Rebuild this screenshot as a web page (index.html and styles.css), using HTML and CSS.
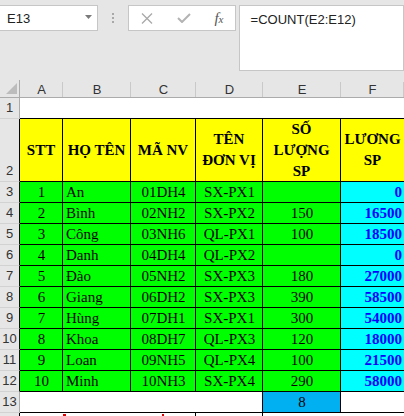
FILE: index.html
```html
<!DOCTYPE html>
<html>
<head>
<meta charset="utf-8">
<link rel="stylesheet" href="styles.css">
</head>
<body>
<div class="toolbar">
  <div class="namebox">
    <span class="ref">E13</span>
    <svg class="dd" viewBox="0 0 7 4"><path d="M0 0h7L3.5 4z"/></svg>
  </div>
  <div class="grip"><i></i><i></i><i></i></div>
  <div class="fxbox">
    <svg class="cancel" viewBox="0 0 12 11"><path d="M1 0.5L11 10.5M11 0.5L1 10.5"/></svg>
    <svg class="check" viewBox="0 0 14 10"><path d="M1 5l4 4L13 1"/></svg>
    <span class="fx">f<span class="fxx">x</span></span>
  </div>
  <div class="formula">=COUNT(E2:E12)</div>
</div>

<div class="sheet">
  <div class="corner"><svg viewBox="0 0 10 10"><path d="M10 0V10H0z"/></svg></div>
  <div class="ch">A</div><div class="ch">B</div><div class="ch">C</div><div class="ch">D</div><div class="ch">E</div><div class="ch">F</div>

  <div class="rh">1</div>
  <div class="c blank span6"></div>

  <div class="rh dk tall">2</div>
  <div class="c y h">STT</div>
  <div class="c y h">HỌ TÊN</div>
  <div class="c y h">MÃ NV</div>
  <div class="c y h">TÊN ĐƠN VỊ</div>
  <div class="c y h">SỐ LƯỢNG SP</div>
  <div class="c y h last">LƯƠNG SP</div>

  <div class="rh dk">3</div>
  <div class="c g ctr">1</div><div class="c g">An</div><div class="c g ctr">01DH4</div><div class="c g ctr">SX-PX1</div><div class="c g ctr"></div><div class="c cy rt num last">0</div>
  <div class="rh dk">4</div>
  <div class="c g ctr">2</div><div class="c g">Bình</div><div class="c g ctr">02NH2</div><div class="c g ctr">SX-PX2</div><div class="c g ctr">150</div><div class="c cy rt num last">16500</div>
  <div class="rh dk">5</div>
  <div class="c g ctr">3</div><div class="c g">Công</div><div class="c g ctr">03NH6</div><div class="c g ctr">QL-PX1</div><div class="c g ctr">100</div><div class="c cy rt num last">18500</div>
  <div class="rh dk">6</div>
  <div class="c g ctr">4</div><div class="c g">Danh</div><div class="c g ctr">04DH4</div><div class="c g ctr">QL-PX2</div><div class="c g ctr"></div><div class="c cy rt num last">0</div>
  <div class="rh dk">7</div>
  <div class="c g ctr">5</div><div class="c g">Đào</div><div class="c g ctr">05NH2</div><div class="c g ctr">SX-PX3</div><div class="c g ctr">180</div><div class="c cy rt num last">27000</div>
  <div class="rh dk">8</div>
  <div class="c g ctr">6</div><div class="c g">Giang</div><div class="c g ctr">06DH2</div><div class="c g ctr">SX-PX3</div><div class="c g ctr">390</div><div class="c cy rt num last">58500</div>
  <div class="rh dk">9</div>
  <div class="c g ctr">7</div><div class="c g">Hùng</div><div class="c g ctr">07DH1</div><div class="c g ctr">SX-PX1</div><div class="c g ctr">300</div><div class="c cy rt num last">54000</div>
  <div class="rh dk">10</div>
  <div class="c g ctr">8</div><div class="c g">Khoa</div><div class="c g ctr">08DH7</div><div class="c g ctr">QL-PX3</div><div class="c g ctr">120</div><div class="c cy rt num last">18000</div>
  <div class="rh dk">11</div>
  <div class="c g ctr">9</div><div class="c g">Loan</div><div class="c g ctr">09NH5</div><div class="c g ctr">QL-PX4</div><div class="c g ctr">100</div><div class="c cy rt num last">21500</div>
  <div class="rh dk">12</div>
  <div class="c g ctr">10</div><div class="c g">Minh</div><div class="c g ctr">10NH3</div><div class="c g ctr">SX-PX4</div><div class="c g ctr">290</div><div class="c cy rt num last">58000</div>

  <div class="rh">13</div>
  <div class="c w span4"></div>
  <div class="c bl ctr">8</div>
  <div class="c w last"></div>

  <div class="rh dk"></div>
  <div class="c w span3"><i class="mark m1"></i><i class="mark m2"></i></div>
  <div class="c w"></div>
  <div class="c w span2 last"></div>
</div>
</body>
</html>
```

FILE: styles.css
```css
* { box-sizing: border-box; }
html, body { margin: 0; padding: 0; }
body {
  width: 404px;
  height: 416px;
  overflow: hidden;
  background: #e6e6e6;
  font-family: "Liberation Sans", Arial, sans-serif;
  color: #222;
}

/* ---------- formula toolbar ---------- */
.toolbar {
  display: flex;
  align-items: flex-start;
  height: 80px;
  padding-top: 5px;
}
.namebox {
  margin-left: -1px;
  width: 102px;
  height: 26px;
  background: #fff;
  border: 1px solid #c6c6c6;
  display: flex;
  align-items: center;
  padding: 0 5px 0 7px;
  font-size: 13px;
}
.namebox .ref { flex: 1; }
.dd { width: 7px; height: 4px; fill: #7a7a7a; margin-top: -2px; }

.grip {
  margin-left: 14px;
  margin-top: 8px;
  width: 2px;
  display: flex;
  flex-direction: column;
  gap: 2px;
}
.grip i { display: block; width: 2px; height: 2px; background: #a8a8a8; }

.fxbox {
  margin-left: 14px;
  width: 110px;
  height: 26px;
  background: #fff;
  border: 1px solid #c6c6c6;
  display: flex;
  align-items: center;
  padding-left: 12px;
}
.cancel { width: 12px; height: 11px; fill: none; stroke: #a9a9a9; stroke-width: 1.3; }
.check { width: 14px; height: 10px; margin-left: 24px; fill: none; stroke: #b3b3b3; stroke-width: 2; }
.fx {
  margin-left: 23px;
  font-family: "Liberation Serif", "Times New Roman", serif;
  font-style: italic;
  font-size: 15px;
  color: #555;
}
.fxx { font-size: 11px; }

.formula {
  margin-left: 3px;
  width: 170px;
  height: 66px;
  background: #fff;
  border: 1px solid #c6c6c6;
  padding: 6px 0 0 11px;
  font-size: 13px;
}

/* ---------- sheet grid ---------- */
.sheet {
  display: grid;
  grid-template-columns: 20px 43px 68px 65px 67px 78px 63px;
  grid-template-rows: 18px 21px 63px repeat(11, 21px) 21px;
}
.corner {
  border-right: 1px solid #ababab;
  border-bottom: 1px solid #ababab;
  display: flex;
  align-items: flex-end;
  justify-content: flex-end;
  padding: 0 2px 3px 0;
}
.corner svg { width: 11px; height: 11px; fill: #bcbcbc; }

.ch {
  background: linear-gradient(#c9c9c9, #c9c9c9) no-repeat right 0 top 2px / 1px 100%, #e6e6e6;
  border-bottom: 1px solid #ababab;
  display: flex;
  align-items: center;
  justify-content: center;
  font-size: 13px;
  color: #333;
  padding-top: 1px;
}

.rh {
  background: #e6e6e6;
  border-right: 1px solid #ababab;
  border-bottom: 1px solid #d2d2d2;
  display: flex;
  align-items: flex-end;
  justify-content: center;
  font-size: 13px;
  color: #333;
  padding-bottom: 3px;
}
.rh.dk { border-right-color: #000; }

.c {
  border-right: 1px solid #000;
  border-bottom: 1px solid #000;
  display: flex;
  align-items: center;
  padding: 0 2px 0 3px;
  font-family: "Liberation Serif", "Times New Roman", serif;
  font-size: 15px;
  color: #000;
  white-space: nowrap;
  overflow: hidden;
}
.c.last { border-right: none; }
.blank { background: #fff; border-right: none; }
.span6 { grid-column: span 6; }
.span4 { grid-column: span 4; }
.span3 { grid-column: span 3; }
.span2 { grid-column: span 2; }

.y { background: #ffff00; }
.g { background: #00ff00; }
.cy { background: #00ffff; }
.bl { background: #00b0f0; }
.w { background: #fff; }

.ctr { justify-content: center; }
.rt { justify-content: flex-end; }
.num { color: #0000ff; font-weight: bold; }

.h {
  font-weight: bold;
  white-space: normal;
  text-align: center;
  justify-content: center;
  line-height: 21px;
  padding: 0 3px;
}

.span3 { align-items: flex-start; padding: 1px 0 0 0; }
.mark { display: block; background: #e00000; }
.m1 { width: 3px; height: 3px; margin-left: 43px; }
.m2 { width: 2px; height: 3px; margin-left: 96px; }
```
